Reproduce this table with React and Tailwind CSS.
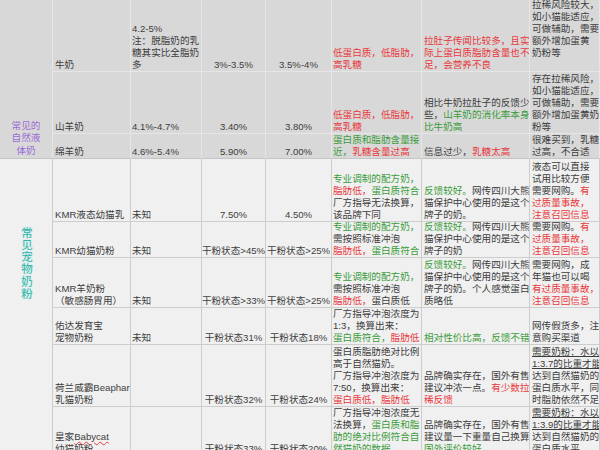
import React from "react";

const R = "text-[#e8383d]";
const G = "text-[#3b9c3b]";

// each line: string, or array of strings / [className, text]
const rows = [
  {
    top: true,
    name: ["牛奶"],
    c2: ["4.2-5%", "注：脱脂奶的乳", "糖其实比全脂奶", "多"],
    c3: "3%-3.5%",
    c4: "3.5%-4%",
    c5: [[[R, "低蛋白质，低脂肪，"]], [[R, "高乳糖"]]],
    c6: [[[R, "拉肚子传闻比较多，且实"]], [[R, "际上蛋白质脂肪含量也不"]], [[R, "足，会营养不良"]]],
    c7: ["拉稀风险较大，", "如小猫能适应，", "可做辅助，需要", "额外增加蛋黄", "奶粉等"],
    c7pb: "pb-[12px]",
  },
  {
    top: true,
    name: ["山羊奶"],
    c2: ["4.1%-4.7%"],
    c3: "3.40%",
    c4: "3.80%",
    c5: [[[R, "低蛋白质，低脂肪，"]], [[R, "高乳糖"]]],
    c6: ["相比牛奶拉肚子的反馈少", ["些，", [G, "山羊奶的消化率本身"]], [[G, "比牛奶高"]]],
    c7: ["存在拉稀风险，", "如小猫能适应，", "可做辅助，需要", "额外增加蛋黄奶", "粉等"],
  },
  {
    top: true,
    last: true,
    name: ["绵羊奶"],
    c2: ["4.6%-5.4%"],
    c3: "5.90%",
    c4: "7.00%",
    c5: [[[G, "蛋白质和脂肪含量接"]], [[G, "近，"], [R, "乳糖含量过高"]]],
    c6: [["信息过少，", [R, "乳糖太高"]]],
    c7: ["很难买到，乳糖", "过高，不合适"],
  },
  {
    name: ["KMR液态幼猫乳"],
    c2: ["未知"],
    c3: "7.50%",
    c4: "4.50%",
    c5: [[[G, "专业调制的配方奶，"]], [[R, "脂肪低，"], [G, "蛋白质符合"]], "厂方指导无法换算，", "该品牌下同"],
    c6: [[[G, "反馈较好。"], "网传四川大熊"], "猫保护中心使用的是这个", "牌子的奶。"],
    c7: ["液态可以直接", "试用比较方便", ["需要网购。", [R, "有"]], [[R, "过质量事故，"]], [[R, "注意召回信息"]]],
  },
  {
    name: ["KMR幼猫奶粉"],
    c2: ["未知"],
    c3: "干粉状态>45%",
    c4: "干粉状态>25%",
    c5: [[[G, "专业调制的配方奶，"]], "需按照标准冲泡", [[R, "脂肪低，"], [G, "蛋白质符合"]]],
    c6: [[[G, "反馈较好。"], "网传四川大熊"], "猫保护中心使用的是这个", "牌子的奶"],
    c7: [["需要网购。", [R, "有"]], [[R, "过质量事故，"]], [[R, "注意召回信息"]]],
  },
  {
    name: ["KMR羊奶粉", "（敏感肠胃用）"],
    c2: ["未知"],
    c3: "干粉状态>33%",
    c4: "干粉状态>25%",
    c5: [[[G, "专业调制的配方奶，"]], "需按照标准冲泡", [[R, "脂肪低，"], "蛋白质低"]],
    c6: [[[G, "反馈较好。"], "网传四川大熊"], "猫保护中心使用的是这个", "牌子的奶。个人感觉蛋白", "质略低"],
    c7: ["需要网购，成", "年猫也可以喝", [[R, "有过质量事故，"]], [[R, "注意召回信息"]]],
  },
  {
    name: ["佑达发育宝", "宠物奶粉"],
    c2: ["未知"],
    c3: "干粉状态31%",
    c4: "干粉状态18%",
    c5: ["厂方指导冲泡浓度为", "1:3，换算出来：", [[G, "蛋白质符合，"], [R, "脂肪低"]]],
    c6: [[[G, "相对性价比高，反馈不错"]]],
    c7: ["网传假货多，注", "意购买渠道"],
  },
  {
    name: ["荷兰威霸Beaphar", "乳猫奶粉"],
    c2: [],
    c3: "干粉状态32%",
    c4: "干粉状态24%",
    c5: ["蛋白质脂肪绝对比例", "高于自然猫奶。", "厂方指导冲泡浓度为", "7:50，换算出来：", [[R, "蛋白质低，脂肪低"]]],
    c6: ["品牌确实存在，国外有售", ["建议冲浓一点。", [R, "有少数拉"]], [[R, "稀反馈"]]],
    c7: [[["underline", "需要奶粉：水以"]], [["underline", "1:3.7的比重才能"]], "达到自然猫奶的", "蛋白质水平，同", "时脂肪依然不足"],
  },
  {
    name: [["皇家", ["underline decoration-wavy decoration-[#e8383d]", "Babycat"]], "幼猫奶粉"],
    c2: [],
    c3: "干粉状态33%",
    c4: "干粉状态20%",
    c5: ["厂方指导冲泡浓度无", ["法换算，", [G, "蛋白质和脂"]], [[G, "肪的绝对比例符合自"]], [[G, "然猫奶的数据"]]],
    c6: ["品牌确实存在，国外有售", "建议量一下重量自己换算。", [[G, "国外评价较好"]]],
    c7: [[["underline", "需要奶粉：水以"]], [["underline", "1:3.9的比重才能"]], "达到自然猫奶的", "蛋白质水平"],
  },
];

function Line({ line }) {
  if (typeof line === "string") return <div className="whitespace-nowrap">{line}</div>;
  return (
    <div className="whitespace-nowrap">
      {line.map((seg, i) =>
        typeof seg === "string" ? (
          <span key={i}>{seg}</span>
        ) : (
          <span key={i} className={seg[0]}>
            {seg[1]}
          </span>
        )
      )}
    </div>
  );
}

function Cell({ row, lines, center, extra = "" }) {
  const bg = row.top ? "bg-[#d8d8d8] border-[#e6e6e6]" : "bg-[#f0f0f0] border-[#cdcdcd]";
  const bottom = row.last ? "border-b-[#c4c4c4]" : "";
  return (
    <div
      className={`flex flex-col justify-end overflow-hidden border-r border-b px-[1px] ${bg} ${bottom} ${
        center ? "items-center" : ""
      } ${extra}`}
    >
      {lines.map((l, i) => (
        <Line key={i} line={l} />
      ))}
    </div>
  );
}

export default function App() {
  return (
    <div className="h-[450px] w-[600px] overflow-hidden bg-[#f0f0f0]">
      <div
        className="grid grid-cols-[53px_78px_71px_64px_66px_90px_108px_70px] grid-rows-[72px_62px_25px_63px_36px_50px_37px_62px_49px] text-[9.6px] leading-[12px] text-[#3d3d3d]"
        style={{ fontFamily: '"Liberation Sans", "Noto Sans CJK SC", sans-serif' }}
      >
        <div className="col-start-1 row-start-1 row-span-3 flex flex-col items-center justify-end border-r border-b border-r-[#e6e6e6] border-b-[#c4c4c4] bg-[#d8d8d8] pb-[1px] leading-[12.5px] text-[#9b6bd6]">
          <div>常见的</div>
          <div>自然液</div>
          <div>体奶</div>
        </div>
        <div className="col-start-1 row-start-4 row-span-6 flex justify-center border-r border-[#cdcdcd] bg-[#f0f0f0] pt-[68px]">
          <div className="text-[11.5px] leading-[14px] tracking-[0.6px] text-[#2fb3aa] [text-orientation:upright] [text-shadow:0_0_2px_#b5ebe6] [writing-mode:vertical-rl]">
            常见宠物奶粉
          </div>
        </div>
        {rows.map((row, i) => (
          <React.Fragment key={i}>
            <Cell row={row} lines={row.name} extra="col-start-2 pl-[2px]" />
            <Cell row={row} lines={row.c2} />
            <Cell row={row} lines={[row.c3]} center />
            <Cell row={row} lines={[row.c4]} center />
            <Cell row={row} lines={row.c5} />
            <Cell row={row} lines={row.c6} extra="pl-[2px]" />
            <Cell row={row} lines={row.c7} extra={`pl-[2px] ${row.c7pb || ""}`} />
          </React.Fragment>
        ))}
      </div>
    </div>
  );
}
